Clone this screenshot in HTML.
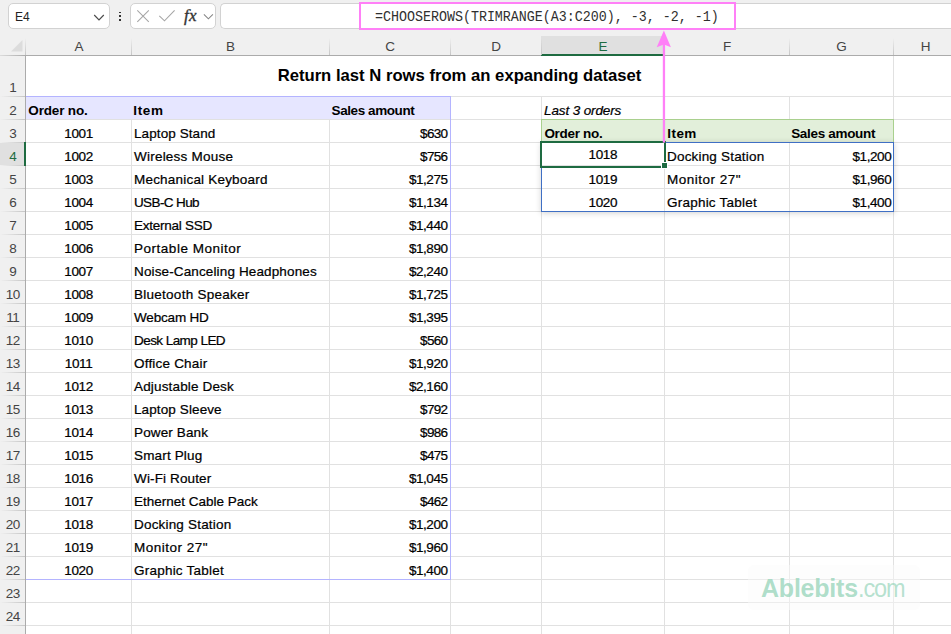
<!DOCTYPE html>
<html><head><meta charset="utf-8"><title>Return last N rows</title>
<style>
html,body{margin:0;padding:0;overflow:hidden;}
body{width:951px;height:634px;overflow:hidden;background:#fff;position:relative;font-family:"Liberation Sans",sans-serif;color:#000;}
.a{position:absolute;}
.t{position:absolute;white-space:nowrap;line-height:16px;height:16px;font-size:13.5px;-webkit-text-stroke:0.22px currentColor;}
.b{font-weight:bold;-webkit-text-stroke:0;}
.i{font-style:italic;}
.c{text-align:center;}
.r{text-align:right;}
.h{color:#444444;}
</style></head><body>
<div class="a" style="left:0px;top:0px;width:951px;height:56px;background:#f0f0f0;"></div>
<div class="a" style="left:8px;top:3px;width:100px;height:24px;background:#fff;border:1px solid #d2d2d2;border-radius:5px;"></div>
<div class="t" style="left:15px;top:8.6px;font-size:12px;color:#222;-webkit-text-stroke:0;"><span>E4</span></div>
<svg class="a" style="left:92px;top:12px" width="14" height="10" viewBox="0 0 14 10"><path d="M2.2 3 L7 7.9 L11.8 3" fill="none" stroke="#4a4a4a" stroke-width="1.15"/></svg>
<div class="a" style="left:119.2px;top:11.5px;width:1.8px;height:1.8px;background:#333;"></div>
<div class="a" style="left:119.2px;top:15.2px;width:1.8px;height:1.8px;background:#333;"></div>
<div class="a" style="left:119.2px;top:18.9px;width:1.8px;height:1.8px;background:#333;"></div>
<div class="a" style="left:130px;top:3px;width:83.5px;height:24px;background:#fff;border:1px solid #d2d2d2;border-radius:5px;"></div>
<svg class="a" style="left:130px;top:3px" width="90" height="26" viewBox="130 3 90 26"><path d="M137.3 10.3 L148.8 21.8 M148.8 10.3 L137.3 21.8" fill="none" stroke="#a6a6a6" stroke-width="1.1"/><path d="M159.3 15.8 L164.5 20.8 L174.6 10.3" fill="none" stroke="#a6a6a6" stroke-width="1.1"/><path d="M203.9 14.3 L208.4 18.8 L212.9 14.3" fill="none" stroke="#858585" stroke-width="1.05"/></svg>
<div class="a" style="left:184px;top:4.6px;font-family:'Liberation Serif',serif;font-style:italic;font-size:17px;line-height:22px;color:#333;letter-spacing:0.4px;-webkit-text-stroke:0.35px #333;">fx</div>
<div class="a" style="left:220px;top:3px;width:730px;height:24px;background:#fff;border:1px solid #d2d2d2;border-right:none;border-radius:5px 0 0 5px;"></div>
<div class="a" style="left:359px;top:2px;width:373px;height:24px;border:2px solid #ff80f7;"></div>
<div class="a" style="left:375.3px;top:6.6px;font-family:'Liberation Mono',monospace;font-size:14.8px;line-height:20px;white-space:pre;color:#303030;transform-origin:0 0;transform:scaleX(0.9);"><span>=CHOOSEROWS(TRIMRANGE(A3:C200), -3, -2, -1)</span></div>
<div class="a" style="left:541px;top:36px;width:122px;height:18px;background:#e0e0e0;"></div>
<div class="a" style="left:25px;top:55px;width:926px;height:1px;background:#ababab;"></div>
<div class="a" style="left:0;top:55px;width:25px;height:1px;background:linear-gradient(to right,#dcdcdc,#ababab);"></div>
<div class="a" style="left:541px;top:54px;width:123px;height:2px;background:#1e6b41;"></div>
<div class="a" style="left:25px;top:38px;width:1px;height:17px;background:linear-gradient(to bottom,rgba(200,200,200,0),#c6c6c6);"></div>
<div class="a" style="left:131px;top:38px;width:1px;height:17px;background:linear-gradient(to bottom,rgba(200,200,200,0),#c6c6c6);"></div>
<div class="a" style="left:329px;top:38px;width:1px;height:17px;background:linear-gradient(to bottom,rgba(200,200,200,0),#c6c6c6);"></div>
<div class="a" style="left:450px;top:38px;width:1px;height:17px;background:linear-gradient(to bottom,rgba(200,200,200,0),#c6c6c6);"></div>
<div class="a" style="left:541px;top:38px;width:1px;height:17px;background:linear-gradient(to bottom,rgba(200,200,200,0),#c6c6c6);"></div>
<div class="a" style="left:664px;top:38px;width:1px;height:17px;background:linear-gradient(to bottom,rgba(200,200,200,0),#c6c6c6);"></div>
<div class="a" style="left:789px;top:38px;width:1px;height:17px;background:linear-gradient(to bottom,rgba(200,200,200,0),#c6c6c6);"></div>
<div class="a" style="left:893px;top:38px;width:1px;height:17px;background:linear-gradient(to bottom,rgba(200,200,200,0),#c6c6c6);"></div>
<svg class="a" style="left:10px;top:39px" width="14" height="14" viewBox="0 0 14 14"><path d="M12.5 1 L12.5 12.5 L1 12.5 Z" fill="#dcdcdc"/></svg>
<div class="t " style="left:26.6px;width:105px;text-align:center;top:38.7px;-webkit-text-stroke:0;color:#444444;"><span>A</span></div>
<div class="t " style="left:131.6px;width:198px;text-align:center;top:38.7px;-webkit-text-stroke:0;color:#444444;"><span>B</span></div>
<div class="t " style="left:329.6px;width:121px;text-align:center;top:38.7px;-webkit-text-stroke:0;color:#444444;"><span>C</span></div>
<div class="t " style="left:450.6px;width:91px;text-align:center;top:38.7px;-webkit-text-stroke:0;color:#444444;"><span>D</span></div>
<div class="t " style="left:541.6px;width:123px;text-align:center;top:38.7px;-webkit-text-stroke:0;color:#1e6b41;"><span>E</span></div>
<div class="t " style="left:664.6px;width:125px;text-align:center;top:38.7px;-webkit-text-stroke:0;color:#444444;"><span>F</span></div>
<div class="t " style="left:789.6px;width:104px;text-align:center;top:38.7px;-webkit-text-stroke:0;color:#444444;"><span>G</span></div>
<div class="t " style="left:893.6px;width:64px;text-align:center;top:38.7px;-webkit-text-stroke:0;color:#444444;"><span>H</span></div>
<div class="a" style="left:26px;top:96px;width:925px;height:1px;background:#e1e1e1;"></div>
<div class="a" style="left:26px;top:119px;width:925px;height:1px;background:#e1e1e1;"></div>
<div class="a" style="left:26px;top:142px;width:925px;height:1px;background:#e1e1e1;"></div>
<div class="a" style="left:26px;top:165px;width:925px;height:1px;background:#e1e1e1;"></div>
<div class="a" style="left:26px;top:188px;width:925px;height:1px;background:#e1e1e1;"></div>
<div class="a" style="left:26px;top:211px;width:925px;height:1px;background:#e1e1e1;"></div>
<div class="a" style="left:26px;top:234px;width:925px;height:1px;background:#e1e1e1;"></div>
<div class="a" style="left:26px;top:257px;width:925px;height:1px;background:#e1e1e1;"></div>
<div class="a" style="left:26px;top:280px;width:925px;height:1px;background:#e1e1e1;"></div>
<div class="a" style="left:26px;top:303px;width:925px;height:1px;background:#e1e1e1;"></div>
<div class="a" style="left:26px;top:326px;width:925px;height:1px;background:#e1e1e1;"></div>
<div class="a" style="left:26px;top:349px;width:925px;height:1px;background:#e1e1e1;"></div>
<div class="a" style="left:26px;top:372px;width:925px;height:1px;background:#e1e1e1;"></div>
<div class="a" style="left:26px;top:395px;width:925px;height:1px;background:#e1e1e1;"></div>
<div class="a" style="left:26px;top:418px;width:925px;height:1px;background:#e1e1e1;"></div>
<div class="a" style="left:26px;top:441px;width:925px;height:1px;background:#e1e1e1;"></div>
<div class="a" style="left:26px;top:464px;width:925px;height:1px;background:#e1e1e1;"></div>
<div class="a" style="left:26px;top:487px;width:925px;height:1px;background:#e1e1e1;"></div>
<div class="a" style="left:26px;top:510px;width:925px;height:1px;background:#e1e1e1;"></div>
<div class="a" style="left:26px;top:533px;width:925px;height:1px;background:#e1e1e1;"></div>
<div class="a" style="left:26px;top:556px;width:925px;height:1px;background:#e1e1e1;"></div>
<div class="a" style="left:26px;top:579px;width:925px;height:1px;background:#e1e1e1;"></div>
<div class="a" style="left:26px;top:602px;width:925px;height:1px;background:#e1e1e1;"></div>
<div class="a" style="left:26px;top:625px;width:925px;height:1px;background:#e1e1e1;"></div>
<div class="a" style="left:131px;top:96px;width:1px;height:538px;background:#e1e1e1;"></div>
<div class="a" style="left:329px;top:96px;width:1px;height:538px;background:#e1e1e1;"></div>
<div class="a" style="left:450px;top:96px;width:1px;height:538px;background:#e1e1e1;"></div>
<div class="a" style="left:541px;top:96px;width:1px;height:538px;background:#e1e1e1;"></div>
<div class="a" style="left:664px;top:96px;width:1px;height:538px;background:#e1e1e1;"></div>
<div class="a" style="left:789px;top:96px;width:1px;height:538px;background:#e1e1e1;"></div>
<div class="a" style="left:893px;top:56px;width:1px;height:578px;background:#e1e1e1;"></div>
<div class="a" style="left:0px;top:56px;width:25px;height:578px;background:#f0f0f0;"></div>
<div class="a" style="left:0px;top:143px;width:25px;height:22px;background:#e0e0e0;"></div>
<div class="a" style="left:25px;top:56px;width:1px;height:578px;background:#ababab;"></div>
<div class="a" style="left:0;top:96px;width:25px;height:1px;background:linear-gradient(to right,rgba(200,200,200,0),#c6c6c6);"></div>
<div class="a" style="left:0;top:119px;width:25px;height:1px;background:linear-gradient(to right,rgba(200,200,200,0),#c6c6c6);"></div>
<div class="a" style="left:0;top:142px;width:25px;height:1px;background:linear-gradient(to right,rgba(200,200,200,0),#c6c6c6);"></div>
<div class="a" style="left:0;top:165px;width:25px;height:1px;background:linear-gradient(to right,rgba(200,200,200,0),#c6c6c6);"></div>
<div class="a" style="left:0;top:188px;width:25px;height:1px;background:linear-gradient(to right,rgba(200,200,200,0),#c6c6c6);"></div>
<div class="a" style="left:0;top:211px;width:25px;height:1px;background:linear-gradient(to right,rgba(200,200,200,0),#c6c6c6);"></div>
<div class="a" style="left:0;top:234px;width:25px;height:1px;background:linear-gradient(to right,rgba(200,200,200,0),#c6c6c6);"></div>
<div class="a" style="left:0;top:257px;width:25px;height:1px;background:linear-gradient(to right,rgba(200,200,200,0),#c6c6c6);"></div>
<div class="a" style="left:0;top:280px;width:25px;height:1px;background:linear-gradient(to right,rgba(200,200,200,0),#c6c6c6);"></div>
<div class="a" style="left:0;top:303px;width:25px;height:1px;background:linear-gradient(to right,rgba(200,200,200,0),#c6c6c6);"></div>
<div class="a" style="left:0;top:326px;width:25px;height:1px;background:linear-gradient(to right,rgba(200,200,200,0),#c6c6c6);"></div>
<div class="a" style="left:0;top:349px;width:25px;height:1px;background:linear-gradient(to right,rgba(200,200,200,0),#c6c6c6);"></div>
<div class="a" style="left:0;top:372px;width:25px;height:1px;background:linear-gradient(to right,rgba(200,200,200,0),#c6c6c6);"></div>
<div class="a" style="left:0;top:395px;width:25px;height:1px;background:linear-gradient(to right,rgba(200,200,200,0),#c6c6c6);"></div>
<div class="a" style="left:0;top:418px;width:25px;height:1px;background:linear-gradient(to right,rgba(200,200,200,0),#c6c6c6);"></div>
<div class="a" style="left:0;top:441px;width:25px;height:1px;background:linear-gradient(to right,rgba(200,200,200,0),#c6c6c6);"></div>
<div class="a" style="left:0;top:464px;width:25px;height:1px;background:linear-gradient(to right,rgba(200,200,200,0),#c6c6c6);"></div>
<div class="a" style="left:0;top:487px;width:25px;height:1px;background:linear-gradient(to right,rgba(200,200,200,0),#c6c6c6);"></div>
<div class="a" style="left:0;top:510px;width:25px;height:1px;background:linear-gradient(to right,rgba(200,200,200,0),#c6c6c6);"></div>
<div class="a" style="left:0;top:533px;width:25px;height:1px;background:linear-gradient(to right,rgba(200,200,200,0),#c6c6c6);"></div>
<div class="a" style="left:0;top:556px;width:25px;height:1px;background:linear-gradient(to right,rgba(200,200,200,0),#c6c6c6);"></div>
<div class="a" style="left:0;top:579px;width:25px;height:1px;background:linear-gradient(to right,rgba(200,200,200,0),#c6c6c6);"></div>
<div class="a" style="left:0;top:602px;width:25px;height:1px;background:linear-gradient(to right,rgba(200,200,200,0),#c6c6c6);"></div>
<div class="a" style="left:0;top:625px;width:25px;height:1px;background:linear-gradient(to right,rgba(200,200,200,0),#c6c6c6);"></div>
<div class="a" style="left:24px;top:142px;width:2px;height:24px;background:#1e6b41;"></div>
<div class="t " style="left:0px;width:26px;text-align:center;top:80px;-webkit-text-stroke:0;color:#444444;"><span>1</span></div>
<div class="t " style="left:0px;width:26px;text-align:center;top:103px;-webkit-text-stroke:0;color:#444444;"><span>2</span></div>
<div class="t " style="left:0px;width:26px;text-align:center;top:126px;-webkit-text-stroke:0;color:#444444;"><span>3</span></div>
<div class="t " style="left:0px;width:26px;text-align:center;top:149px;-webkit-text-stroke:0;color:#1e6b41;"><span>4</span></div>
<div class="t " style="left:0px;width:26px;text-align:center;top:172px;-webkit-text-stroke:0;color:#444444;"><span>5</span></div>
<div class="t " style="left:0px;width:26px;text-align:center;top:195px;-webkit-text-stroke:0;color:#444444;"><span>6</span></div>
<div class="t " style="left:0px;width:26px;text-align:center;top:218px;-webkit-text-stroke:0;color:#444444;"><span>7</span></div>
<div class="t " style="left:0px;width:26px;text-align:center;top:241px;-webkit-text-stroke:0;color:#444444;"><span>8</span></div>
<div class="t " style="left:0px;width:26px;text-align:center;top:264px;-webkit-text-stroke:0;color:#444444;"><span>9</span></div>
<div class="t " style="left:0px;width:26px;text-align:center;top:287px;-webkit-text-stroke:0;color:#444444;letter-spacing:-0.45px;text-indent:-0.45px;"><span>10</span></div>
<div class="t " style="left:0px;width:26px;text-align:center;top:310px;-webkit-text-stroke:0;color:#444444;letter-spacing:-0.45px;text-indent:-0.45px;"><span>11</span></div>
<div class="t " style="left:0px;width:26px;text-align:center;top:333px;-webkit-text-stroke:0;color:#444444;letter-spacing:-0.45px;text-indent:-0.45px;"><span>12</span></div>
<div class="t " style="left:0px;width:26px;text-align:center;top:356px;-webkit-text-stroke:0;color:#444444;letter-spacing:-0.45px;text-indent:-0.45px;"><span>13</span></div>
<div class="t " style="left:0px;width:26px;text-align:center;top:379px;-webkit-text-stroke:0;color:#444444;letter-spacing:-0.45px;text-indent:-0.45px;"><span>14</span></div>
<div class="t " style="left:0px;width:26px;text-align:center;top:402px;-webkit-text-stroke:0;color:#444444;letter-spacing:-0.45px;text-indent:-0.45px;"><span>15</span></div>
<div class="t " style="left:0px;width:26px;text-align:center;top:425px;-webkit-text-stroke:0;color:#444444;letter-spacing:-0.45px;text-indent:-0.45px;"><span>16</span></div>
<div class="t " style="left:0px;width:26px;text-align:center;top:448px;-webkit-text-stroke:0;color:#444444;letter-spacing:-0.45px;text-indent:-0.45px;"><span>17</span></div>
<div class="t " style="left:0px;width:26px;text-align:center;top:471px;-webkit-text-stroke:0;color:#444444;letter-spacing:-0.45px;text-indent:-0.45px;"><span>18</span></div>
<div class="t " style="left:0px;width:26px;text-align:center;top:494px;-webkit-text-stroke:0;color:#444444;letter-spacing:-0.45px;text-indent:-0.45px;"><span>19</span></div>
<div class="t " style="left:0px;width:26px;text-align:center;top:517px;-webkit-text-stroke:0;color:#444444;letter-spacing:-0.45px;text-indent:-0.45px;"><span>20</span></div>
<div class="t " style="left:0px;width:26px;text-align:center;top:540px;-webkit-text-stroke:0;color:#444444;letter-spacing:-0.45px;text-indent:-0.45px;"><span>21</span></div>
<div class="t " style="left:0px;width:26px;text-align:center;top:563px;-webkit-text-stroke:0;color:#444444;letter-spacing:-0.45px;text-indent:-0.45px;"><span>22</span></div>
<div class="t " style="left:0px;width:26px;text-align:center;top:586px;-webkit-text-stroke:0;color:#444444;letter-spacing:-0.45px;text-indent:-0.45px;"><span>23</span></div>
<div class="t " style="left:0px;width:26px;text-align:center;top:609px;-webkit-text-stroke:0;color:#444444;letter-spacing:-0.45px;text-indent:-0.45px;"><span>24</span></div>
<div class="a" style="left:26px;top:97px;width:424px;height:22px;background:#e6e6ff;"></div>
<div class="a" style="left:26px;top:96px;width:425px;height:1px;background:#b4b4ff;"></div>
<div class="a" style="left:450px;top:96px;width:1px;height:484px;background:#b4b4ff;"></div>
<div class="a" style="left:26px;top:579px;width:425px;height:1px;background:#b4b4ff;"></div>
<div class="a b" style="left:26px;top:65.3px;width:867px;text-align:center;font-size:16.67px;line-height:22px;white-space:nowrap;"><span>Return last N rows from an expanding dataset</span></div>
<div class="t b" style="letter-spacing:-0.17px;left:28.35px;top:102.6px;"><span>Order no.</span></div>
<div class="t b" style="letter-spacing:0.693px;left:133.2px;top:102.6px;"><span>Item</span></div>
<div class="t b" style="letter-spacing:-0.414px;left:331.55px;top:102.6px;"><span>Sales amount</span></div>
<div class="t " style="letter-spacing:-0.35px;left:26.1px;width:105px;text-align:center;top:125.6px;"><span>1001</span></div>
<div class="t " style="letter-spacing:0.091px;left:134px;top:125.6px;"><span>Laptop Stand</span></div>
<div class="t " style="letter-spacing:-0.64px;left:328.5px;width:119px;text-align:right;top:125.6px;"><span>$630</span></div>
<div class="t " style="letter-spacing:-0.35px;left:26.1px;width:105px;text-align:center;top:148.6px;"><span>1002</span></div>
<div class="t " style="letter-spacing:0.223px;left:134px;top:148.6px;"><span>Wireless Mouse</span></div>
<div class="t " style="letter-spacing:-0.64px;left:328.5px;width:119px;text-align:right;top:148.6px;"><span>$756</span></div>
<div class="t " style="letter-spacing:-0.35px;left:26.1px;width:105px;text-align:center;top:171.6px;"><span>1003</span></div>
<div class="t " style="letter-spacing:0.2px;left:134px;top:171.6px;"><span>Mechanical Keyboard</span></div>
<div class="t " style="letter-spacing:-0.45px;left:328.5px;width:119px;text-align:right;top:171.6px;"><span>$1,275</span></div>
<div class="t " style="letter-spacing:-0.35px;left:26.1px;width:105px;text-align:center;top:194.6px;"><span>1004</span></div>
<div class="t " style="letter-spacing:-0.625px;left:134px;top:194.6px;"><span>USB-C Hub</span></div>
<div class="t " style="letter-spacing:-0.45px;left:328.5px;width:119px;text-align:right;top:194.6px;"><span>$1,134</span></div>
<div class="t " style="letter-spacing:-0.35px;left:26.1px;width:105px;text-align:center;top:217.6px;"><span>1005</span></div>
<div class="t " style="letter-spacing:-0.255px;left:134px;top:217.6px;"><span>External SSD</span></div>
<div class="t " style="letter-spacing:-0.45px;left:328.5px;width:119px;text-align:right;top:217.6px;"><span>$1,440</span></div>
<div class="t " style="letter-spacing:-0.35px;left:26.1px;width:105px;text-align:center;top:240.6px;"><span>1006</span></div>
<div class="t " style="letter-spacing:0.52px;left:134px;top:240.6px;"><span>Portable Monitor</span></div>
<div class="t " style="letter-spacing:-0.45px;left:328.5px;width:119px;text-align:right;top:240.6px;"><span>$1,890</span></div>
<div class="t " style="letter-spacing:-0.35px;left:26.1px;width:105px;text-align:center;top:263.6px;"><span>1007</span></div>
<div class="t " style="letter-spacing:0.132px;left:134px;top:263.6px;"><span>Noise-Canceling Headphones</span></div>
<div class="t " style="letter-spacing:-0.45px;left:328.5px;width:119px;text-align:right;top:263.6px;"><span>$2,240</span></div>
<div class="t " style="letter-spacing:-0.35px;left:26.1px;width:105px;text-align:center;top:286.6px;"><span>1008</span></div>
<div class="t " style="letter-spacing:0.263px;left:134px;top:286.6px;"><span>Bluetooth Speaker</span></div>
<div class="t " style="letter-spacing:-0.45px;left:328.5px;width:119px;text-align:right;top:286.6px;"><span>$1,725</span></div>
<div class="t " style="letter-spacing:-0.35px;left:26.1px;width:105px;text-align:center;top:309.6px;"><span>1009</span></div>
<div class="t " style="letter-spacing:-0.175px;left:134px;top:309.6px;"><span>Webcam HD</span></div>
<div class="t " style="letter-spacing:-0.45px;left:328.5px;width:119px;text-align:right;top:309.6px;"><span>$1,395</span></div>
<div class="t " style="letter-spacing:-0.35px;left:26.1px;width:105px;text-align:center;top:332.6px;"><span>1010</span></div>
<div class="t " style="letter-spacing:-0.559px;left:134px;top:332.6px;"><span>Desk Lamp LED</span></div>
<div class="t " style="letter-spacing:-0.64px;left:328.5px;width:119px;text-align:right;top:332.6px;"><span>$560</span></div>
<div class="t " style="letter-spacing:-0.35px;left:26.1px;width:105px;text-align:center;top:355.6px;"><span>1011</span></div>
<div class="t " style="letter-spacing:0.199px;left:134px;top:355.6px;"><span>Office Chair</span></div>
<div class="t " style="letter-spacing:-0.45px;left:328.5px;width:119px;text-align:right;top:355.6px;"><span>$1,920</span></div>
<div class="t " style="letter-spacing:-0.35px;left:26.1px;width:105px;text-align:center;top:378.6px;"><span>1012</span></div>
<div class="t " style="letter-spacing:0.157px;left:134px;top:378.6px;"><span>Adjustable Desk</span></div>
<div class="t " style="letter-spacing:-0.45px;left:328.5px;width:119px;text-align:right;top:378.6px;"><span>$2,160</span></div>
<div class="t " style="letter-spacing:-0.35px;left:26.1px;width:105px;text-align:center;top:401.6px;"><span>1013</span></div>
<div class="t " style="letter-spacing:0.108px;left:134px;top:401.6px;"><span>Laptop Sleeve</span></div>
<div class="t " style="letter-spacing:-0.64px;left:328.5px;width:119px;text-align:right;top:401.6px;"><span>$792</span></div>
<div class="t " style="letter-spacing:-0.35px;left:26.1px;width:105px;text-align:center;top:424.6px;"><span>1014</span></div>
<div class="t " style="letter-spacing:0.133px;left:134px;top:424.6px;"><span>Power Bank</span></div>
<div class="t " style="letter-spacing:-0.64px;left:328.5px;width:119px;text-align:right;top:424.6px;"><span>$986</span></div>
<div class="t " style="letter-spacing:-0.35px;left:26.1px;width:105px;text-align:center;top:447.6px;"><span>1015</span></div>
<div class="t " style="letter-spacing:0.156px;left:134px;top:447.6px;"><span>Smart Plug</span></div>
<div class="t " style="letter-spacing:-0.64px;left:328.5px;width:119px;text-align:right;top:447.6px;"><span>$475</span></div>
<div class="t " style="letter-spacing:-0.35px;left:26.1px;width:105px;text-align:center;top:470.6px;"><span>1016</span></div>
<div class="t " style="letter-spacing:0.136px;left:134px;top:470.6px;"><span>Wi-Fi Router</span></div>
<div class="t " style="letter-spacing:-0.45px;left:328.5px;width:119px;text-align:right;top:470.6px;"><span>$1,045</span></div>
<div class="t " style="letter-spacing:-0.35px;left:26.1px;width:105px;text-align:center;top:493.6px;"><span>1017</span></div>
<div class="t " style="letter-spacing:-0.005px;left:134px;top:493.6px;"><span>Ethernet Cable Pack</span></div>
<div class="t " style="letter-spacing:-0.64px;left:328.5px;width:119px;text-align:right;top:493.6px;"><span>$462</span></div>
<div class="t " style="letter-spacing:-0.35px;left:26.1px;width:105px;text-align:center;top:516.6px;"><span>1018</span></div>
<div class="t " style="letter-spacing:0.185px;left:134px;top:516.6px;"><span>Docking Station</span></div>
<div class="t " style="letter-spacing:-0.45px;left:328.5px;width:119px;text-align:right;top:516.6px;"><span>$1,200</span></div>
<div class="t " style="letter-spacing:-0.35px;left:26.1px;width:105px;text-align:center;top:539.6px;"><span>1019</span></div>
<div class="t " style="letter-spacing:0.5px;left:134px;top:539.6px;"><span>Monitor 27&quot;</span></div>
<div class="t " style="letter-spacing:-0.45px;left:328.5px;width:119px;text-align:right;top:539.6px;"><span>$1,960</span></div>
<div class="t " style="letter-spacing:-0.35px;left:26.1px;width:105px;text-align:center;top:562.6px;"><span>1020</span></div>
<div class="t " style="letter-spacing:0.223px;left:134px;top:562.6px;"><span>Graphic Tablet</span></div>
<div class="t " style="letter-spacing:-0.45px;left:328.5px;width:119px;text-align:right;top:562.6px;"><span>$1,400</span></div>
<div class="t i" style="letter-spacing:-0.12px;left:544px;top:102.6px;"><span>Last 3 orders</span></div>
<div class="a" style="left:541px;top:120px;width:353px;height:22px;background:#e2efda;"></div>
<div class="a" style="left:541px;top:119px;width:353px;height:1px;background:#a9d08e;"></div>
<div class="a" style="left:541px;top:119px;width:1px;height:23px;background:#a9d08e;"></div>
<div class="a" style="left:893px;top:119px;width:1px;height:23px;background:#a9d08e;"></div>
<div class="t b" style="letter-spacing:-0.3px;left:544.4px;top:125.6px;"><span>Order no.</span></div>
<div class="t b" style="letter-spacing:0.427px;left:667.3px;top:125.6px;"><span>Item</span></div>
<div class="t b" style="letter-spacing:-0.312px;left:791.15px;top:125.6px;"><span>Sales amount</span></div>
<div class="a" style="left:541px;top:142px;width:353px;height:70px;box-shadow:0 1px 6px rgba(0,0,0,0.18);"></div>
<div class="a" style="left:542px;top:143px;width:351px;height:68px;background:#fff;"></div>
<div class="a" style="left:542px;top:165px;width:351px;height:1px;background:#e1e1e1;"></div>
<div class="a" style="left:542px;top:188px;width:351px;height:1px;background:#e1e1e1;"></div>
<div class="a" style="left:664px;top:143px;width:1px;height:68px;background:#e1e1e1;"></div>
<div class="a" style="left:789px;top:143px;width:1px;height:68px;background:#e1e1e1;"></div>
<div class="a" style="left:541px;top:142px;width:351px;height:68px;border:1px solid #3f6fc4;"></div>
<div class="t " style="letter-spacing:-0.35px;left:541.3px;width:123px;text-align:center;top:146.6px;"><span>1018</span></div>
<div class="t " style="letter-spacing:0.185px;left:667px;top:148.6px;"><span>Docking Station</span></div>
<div class="t " style="letter-spacing:-0.42px;left:788.75px;width:102.5px;text-align:right;top:148.6px;"><span>$1,200</span></div>
<div class="t " style="letter-spacing:-0.35px;left:541.3px;width:123px;text-align:center;top:171.6px;"><span>1019</span></div>
<div class="t " style="letter-spacing:0.5px;left:667px;top:171.6px;"><span>Monitor 27&quot;</span></div>
<div class="t " style="letter-spacing:-0.42px;left:788.75px;width:102.5px;text-align:right;top:171.6px;"><span>$1,960</span></div>
<div class="t " style="letter-spacing:-0.35px;left:541.3px;width:123px;text-align:center;top:194.6px;"><span>1020</span></div>
<div class="t " style="letter-spacing:0.223px;left:667px;top:194.6px;"><span>Graphic Tablet</span></div>
<div class="t " style="letter-spacing:-0.42px;left:788.75px;width:102.5px;text-align:right;top:194.6px;"><span>$1,400</span></div>
<div class="a" style="left:540px;top:141px;width:122px;height:23px;border:2px solid #1e6b41;"></div>
<div class="a" style="left:661px;top:162px;width:7px;height:7px;background:#fff;"></div>
<div class="a" style="left:662px;top:163px;width:5.4px;height:5px;background:#1e6b41;"></div>
<svg class="a" style="left:650px;top:28px" width="30" height="120" viewBox="650 28 30 120"><path d="M662.8 44 L662.8 142.6 L665.1 142.6 L665.1 44 Z" fill="#ff80f7"/><path d="M663.9 30.6 L670.9 47.3 L663.9 44.5 L656.7 47.3 Z" fill="#ff80f7"/></svg>
<div class="a" style="left:748px;top:565px;width:172px;height:45px;border-radius:6px;background:rgba(250,250,250,0.45);"></div>
<div class="a" style="left:761px;top:573px;font-size:25px;line-height:30px;white-space:nowrap;color:rgba(146,211,183,0.74);letter-spacing:-0.22px;"><span><b>Ablebits</b><span style="display:inline-block;letter-spacing:-1.2px;color:rgba(156,215,190,0.74);transform-origin:0 50%;transform:scaleX(0.94);margin-left:0.6px;">.com</span></span></div>
</body></html>
